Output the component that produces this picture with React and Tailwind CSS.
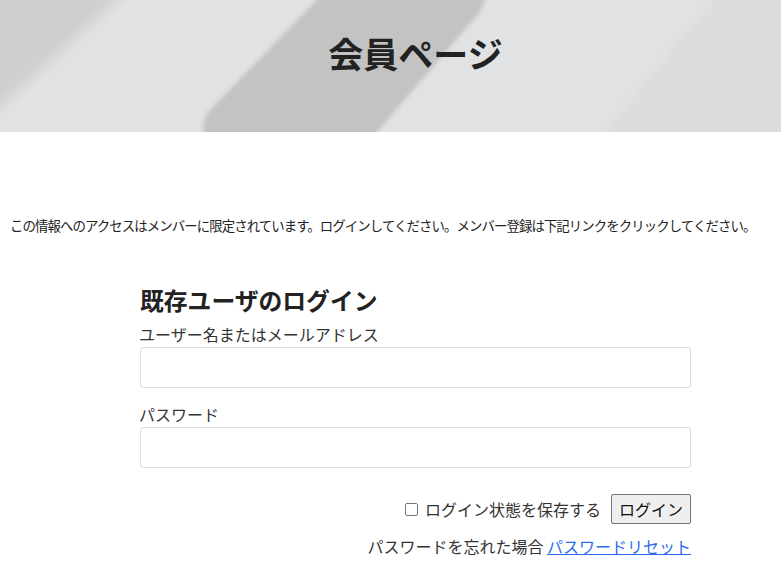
import React from 'react';

const jp = { fontFamily: '"Noto Sans CJK JP", "Noto Sans", sans-serif' };

const HeaderBg = () => (
  <svg className="absolute inset-0 w-full h-full" viewBox="0 0 781 132" preserveAspectRatio="none">
    <defs>
      <filter id="soft" x="-20%" y="-20%" width="140%" height="140%">
        <feGaussianBlur stdDeviation="2" />
      </filter>
      <filter id="softer" x="-20%" y="-20%" width="140%" height="140%">
        <feGaussianBlur stdDeviation="6" />
      </filter>
    </defs>
    <rect width="781" height="132" fill="#e1e2e4" />
    {/* left shadow */}
    <path d="M-20 -10 L128 -10 L-20 125 Z" fill="#cfcfd0" filter="url(#softer)" />
    {/* right tint */}
    <path d="M722 -10 L800 -10 L800 140 L600 140 Z" fill="#dbdbdc" filter="url(#softer)" />
    {/* center blob */}
    <path
      d="M336 -20 L470 -20 Q496 -20 480 12 L370 140 L220 140 Q194 140 208 112 Z"
      fill="#c3c3c3"
      filter="url(#soft)"
    />
  </svg>
);

const App = () => {
  return (
    <div className="w-[781px] min-h-[588px] bg-white text-[#333]" style={jp}>
      <header className="relative h-[132px] overflow-hidden">
        <HeaderBg />
        <div className="relative flex justify-center pt-[26px] pl-[50px]">
          <h1 className="text-[35px] leading-[54px] font-bold text-[#222]">会員ページ</h1>
        </div>
      </header>

      <p className="mt-[83px] pl-[10px] text-[13.4px] tracking-[-0.9px] leading-[20px] text-[#222] whitespace-nowrap">
        この情報へのアクセスはメンバーに限定されています。ログインしてください。メンバー登録は下記リンクをクリックしてください。
      </p>

      <div className="w-[551px] ml-[140px] mt-[50px]">
        <h2 className="text-[23.8px] leading-[30px] font-bold text-[#222]">既存ユーザのログイン</h2>

        <label className="block text-[16px] leading-[22px] mt-[8px] -ml-[1px]">ユーザー名またはメールアドレス</label>
        <input type="text" className="block w-full h-[41px] mt-[2px] border border-[#dedede] rounded-[3px] bg-white outline-none" />

        <label className="block text-[16px] leading-[22px] mt-[15px] -ml-[1px]">パスワード</label>
        <input type="password" className="block w-full h-[41px] mt-[2px] border border-[#dedede] rounded-[3px] bg-white outline-none" />

        <div className="flex items-center justify-end mt-[26px]">
          <label className="flex items-center text-[16px] leading-[22px]">
            <span className="w-[13px] h-[13px] border border-[#767676] rounded-[2px] bg-white mr-[7px]"></span>
            ログイン状態を保存する
          </label>
          <button className="ml-[10px] h-[30px] px-[7px] text-[16px] leading-[20px] text-[#111] bg-[#efefef] border border-[#767676] rounded-[2px]">
            ログイン
          </button>
        </div>

        <p className="mt-[11px] text-right text-[16px] leading-[22px]">
          パスワードを忘れた場合{' '}
          <a href="#" className="text-[#2a6cf0] underline">パスワードリセット</a>
        </p>
      </div>
    </div>
  );
};

export default App;
